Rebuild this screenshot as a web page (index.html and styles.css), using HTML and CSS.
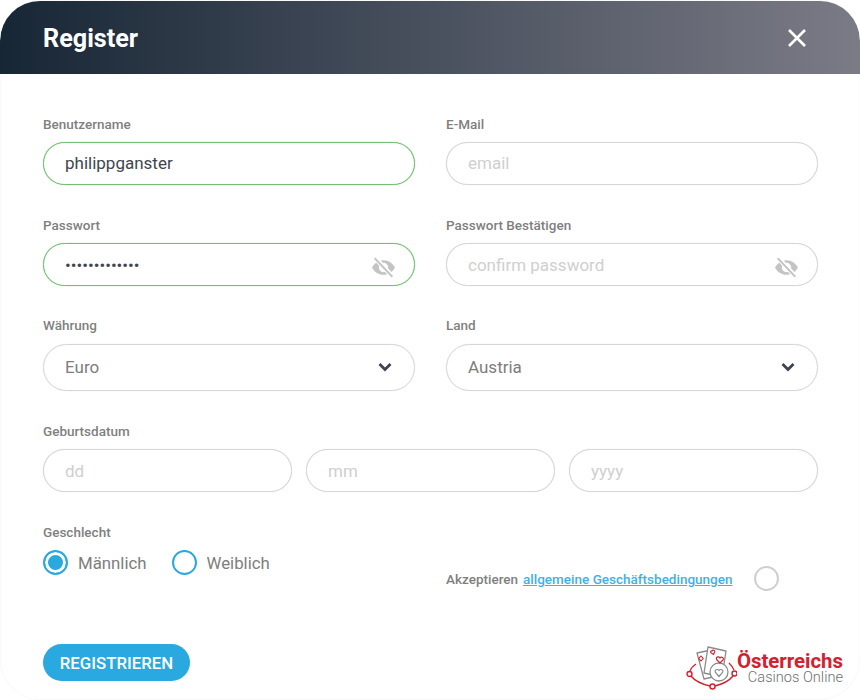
FILE: index.html
```html
<!DOCTYPE html>
<html lang="de">
<head>
  <meta charset="UTF-8">
  <meta name="viewport" content="width=device-width, initial-scale=1.0">
  <title>Register</title>
  <link rel="stylesheet" href="styles.css">
</head>
<body>
  <div class="modal">
    <header class="modal-head">
      <h1>Register</h1>
      <button class="close-btn" aria-label="Close">
        <svg width="20" height="20" viewBox="0 0 20 20"><path d="M2 2 18 18M18 2 2 18" stroke="#fff" stroke-width="2.6" fill="none"/></svg>
      </button>
    </header>

    <form class="form">
      <div class="row row-a">
        <div class="field">
          <label>Benutzername</label>
          <input class="input valid" type="text" value="philippganster">
        </div>
        <div class="field">
          <label>E-Mail</label>
          <input class="input" type="text" placeholder="email">
        </div>
      </div>

      <div class="row row-b">
        <div class="field">
          <label>Passwort</label>
          <div class="input-wrap">
            <input class="input valid" type="password" value="philippganste">
            <svg class="eye" viewBox="0 0 24 24"><path d="M12 5C7 5 3 8 1 12c2 4 6 7 11 7s9-3 11-7c-2-4-6-7-11-7zm0 11.500a4.500 4.500 0 1 1 0-9 4.500 4.500 0 0 1 0 9z"/><path d="M4 3 21 21" stroke="#fff" stroke-width="4.500"/><path d="M3.500 3 20.500 21" stroke="#c4c4c4" stroke-width="2"/></svg>
          </div>
        </div>
        <div class="field">
          <label>Passwort Bestätigen</label>
          <div class="input-wrap">
            <input class="input" type="password" placeholder="confirm password">
            <svg class="eye" viewBox="0 0 24 24"><path d="M12 5C7 5 3 8 1 12c2 4 6 7 11 7s9-3 11-7c-2-4-6-7-11-7zm0 11.500a4.500 4.500 0 1 1 0-9 4.500 4.500 0 0 1 0 9z"/><path d="M4 3 21 21" stroke="#fff" stroke-width="4.500"/><path d="M3.500 3 20.500 21" stroke="#c4c4c4" stroke-width="2"/></svg>
          </div>
        </div>
      </div>

      <div class="row row-c">
        <div class="field">
          <label>Währung</label>
          <div class="select">
            <span>Euro</span>
            <svg width="16" height="10" viewBox="0 0 16 10"><path d="M2.500 2 8 7.500 13.500 2" stroke="#3e4350" stroke-width="2.800" fill="none"/></svg>
          </div>
        </div>
        <div class="field">
          <label>Land</label>
          <div class="select">
            <span>Austria</span>
            <svg width="16" height="10" viewBox="0 0 16 10"><path d="M2.500 2 8 7.500 13.500 2" stroke="#3e4350" stroke-width="2.800" fill="none"/></svg>
          </div>
        </div>
      </div>

      <div class="field field-date">
        <label>Geburtsdatum</label>
        <div class="date-row">
          <input class="input" type="text" placeholder="dd">
          <input class="input" type="text" placeholder="mm">
          <input class="input" type="text" placeholder="yyyy">
        </div>
      </div>

      <div class="row row-e">
        <div class="field">
          <label>Geschlecht</label>
          <div class="radios">
            <span class="radio-item"><span class="radio checked"></span>Männlich</span>
            <span class="radio-item"><span class="radio"></span>Weiblich</span>
          </div>
        </div>
        <div class="terms">
          <span class="terms-label">Akzeptieren</span>
          <a href="#" class="terms-link">allgemeine Geschäftsbedingungen</a>
          <span class="check"></span>
        </div>
      </div>

      <div class="form-foot">
        <button type="button" class="submit-btn">REGISTRIEREN</button>
        <div class="logo">
          <svg class="logo-icon" width="51" height="47" viewBox="0 0 51 47" fill="none">
            <path d="M4 26c1-3 3-5 6-7M48 25c-1-3-3-5-5-7" stroke="#d5202f" stroke-width="1.200"/>
            <path d="M5 31c4 5 10 8 19 10M29 41c8-2 14-5 18-10" stroke="#d5202f" stroke-width="1.400"/>
            <g stroke="#8b8b8b" stroke-width="1.300" fill="#fff" stroke-linejoin="round">
              <path d="M11 8 25 5 31 31 18 34z"/>
              <path d="M22 2 40 6 36 32 18 28z"/>
              <circle cx="33" cy="27" r="9"/>
            </g>
            <path d="M15 11l2.200 2.500L15 16l-2.200-2.500zM26 6c.8-1.500 3-1 2.800.8L27.500 9.500 25 7.800C24 6.800 25 5.500 26 6z" stroke="#d5202f" stroke-width="1.100"/>
            <path d="M31 15c-2-2.500 1.500-4.500 3-2 1.500-2 4.500 0 3 2l-3 3z" stroke="#d5202f" stroke-width="1.200" fill="#fff"/>
            <path d="M33 31.500 29.500 27.500c-1.500-2.500 2-4 3.500-2 1.500-2 5-.5 3.500 2z" stroke="#8b8b8b" stroke-width="1.200"/>
            <circle cx="3.500" cy="29" r="2.500" stroke="#d5202f" stroke-width="1.400" fill="#fff"/>
            <circle cx="48.500" cy="28.500" r="2.500" stroke="#d5202f" stroke-width="1.400" fill="#fff"/>
            <circle cx="26.500" cy="41.500" r="2.500" stroke="#d5202f" stroke-width="1.400" fill="#fff"/>
          </svg>
          <div class="logo-text">
            <span class="logo-top">Österreichs</span>
            <span class="logo-bottom">Casinos Online</span>
          </div>
        </div>
      </div>
    </form>
  </div>
</body>
</html>
```

FILE: styles.css
```css
* {
  margin: 0;
  padding: 0;
  box-sizing: border-box;
}

body {
  font-family: Roboto, 'Liberation Sans', sans-serif;
  background-color: #fff;
  color: #7b7b7b;
  overflow: hidden;
}

.modal {
  width: 860px;
  height: 700px;
  background: #fff;
  border-radius: 40px;
  box-shadow: inset 0 0 2px rgba(0, 0, 0, 0.08);
  overflow: hidden;
}

.modal-head {
  height: 73px;
  margin-top: 1px;
  padding: 0 53px 0 43px;
  display: flex;
  align-items: center;
  justify-content: space-between;
  background: linear-gradient(90deg, #172635 0%, #7b7b86 100%);
  border-radius: 40px 40px 0 0;
}

.modal-head h1 {
  padding-top: 1px;
  font-size: 25.200px;
  font-weight: 700;
  color: #fff;
}

.close-btn {
  display: flex;
  background: none;
  border: none;
  cursor: pointer;
}

.form {
  padding: 42px 42px 0 43px;
}

.row {
  display: grid;
  grid-template-columns: 372px 372px;
  column-gap: 31px;
}

.row-a {
  margin-bottom: 32px;
}

.row-b {
  margin-bottom: 31px;
}

.row-c {
  margin-bottom: 32px;
}

.field label {
  display: block;
  height: 17px;
  line-height: 17px;
  margin-bottom: 9px;
  font-size: 13.500px;
  font-weight: 500;
  color: #7f7f7f;
}

.row-c .field label {
  margin-bottom: 10px;
}

.input {
  display: block;
  width: 100%;
  height: 43px;
  padding: 0 21px 2px;
  font-family: inherit;
  font-size: 17px;
  color: #3f4550;
  background: #fff;
  border: 1px solid #d6d6d6;
  border-radius: 22px;
  box-shadow: 0 0 1px #d6d6d6;
  outline: none;
}

.input::placeholder {
  color: #cfcfcf;
  opacity: 1;
}

.input.valid {
  border-color: #72bf73;
  box-shadow: 0 0 1px #72bf73;
}

.input-wrap .input,
.date-row .input {
  padding-bottom: 0;
}

.input-wrap {
  position: relative;
}

.eye {
  position: absolute;
  right: 19px;
  top: 12px;
  width: 25px;
  height: 25px;
  fill: #c4c4c4;
}

.select {
  height: 47px;
  padding: 0 21px 2px;
  display: flex;
  align-items: center;
  justify-content: space-between;
  font-size: 17px;
  color: #7d7d7d;
  border: 1px solid #d6d6d6;
  border-radius: 24px;
  box-shadow: 0 0 1px #d6d6d6;
}

.field-date {
  margin-bottom: 32px;
}

.date-row {
  display: grid;
  grid-template-columns: repeat(3, 249px);
  column-gap: 14px;
}

.radios {
  display: flex;
  gap: 25px;
  margin-top: 1px;
}

.radio-item {
  display: flex;
  align-items: center;
  gap: 10px;
  font-size: 16.800px;
  color: #7d7d7d;
}

.radio {
  width: 25px;
  height: 25px;
  border: 2px solid #2aa9e0;
  border-radius: 50%;
  background: #fff;
}

.radio.checked {
  background: #2aa9e0;
  box-shadow: inset 0 0 0 3px #fff;
}

.terms {
  display: flex;
  align-items: center;
  align-self: start;
  margin-top: 42px;
  font-size: 13.500px;
}

.terms-label {
  font-weight: 500;
  color: #7f7f7f;
}

.terms-link {
  margin-left: 5px;
  font-weight: 500;
  color: #3fb0e6;
}

.check {
  width: 25px;
  height: 25px;
  margin-left: 21px;
  border: 2px solid #cfcfcf;
  border-radius: 50%;
}

.form-foot {
  display: flex;
  align-items: flex-end;
  justify-content: space-between;
  margin-top: 53px;
  margin-right: -25px;
}

.submit-btn {
  width: 147px;
  height: 37px;
  font-family: inherit;
  font-size: 16.800px;
  font-weight: 500;
  color: #fff;
  background-color: #2aa9e0;
  border: none;
  border-radius: 19px;
  cursor: pointer;
}

.logo {
  display: flex;
  align-items: center;
  margin-bottom: -11px;
}

.logo-text {
  display: flex;
  flex-direction: column;
  text-align: right;
}

.logo-top {
  font-size: 20.400px;
  line-height: 18px;
  font-weight: 700;
  color: #d5202f;
}

.logo-bottom {
  font-size: 14.600px;
  line-height: 15px;
  font-weight: 300;
  color: #6f6f6f;
}
```
